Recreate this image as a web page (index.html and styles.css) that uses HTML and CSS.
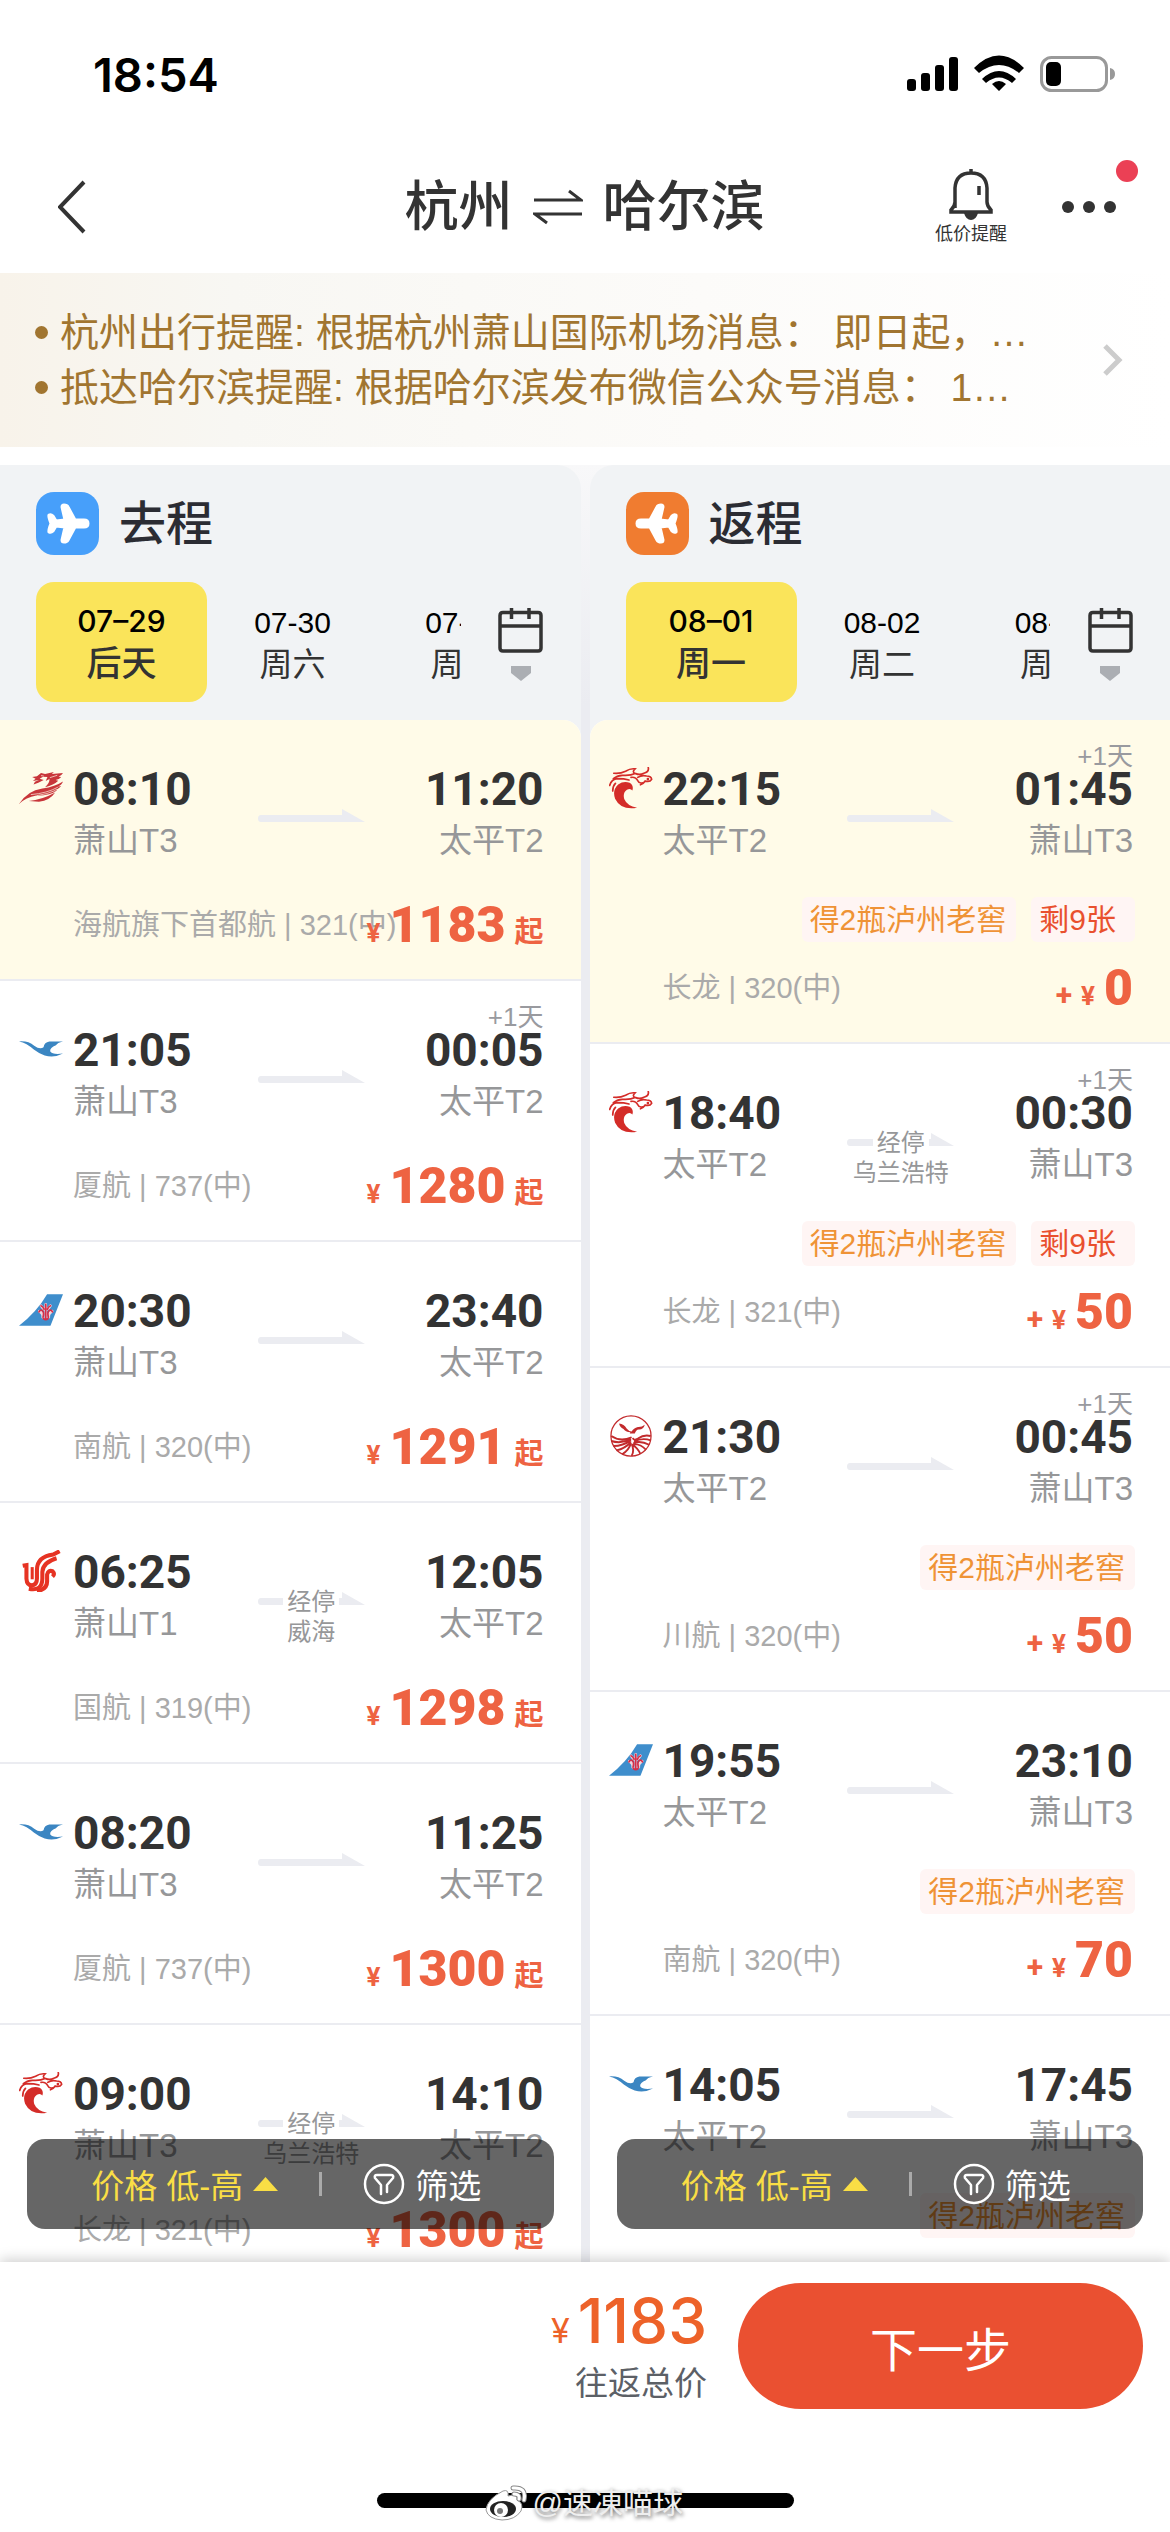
FILE: index.html
```
<!DOCTYPE html>
<html lang="zh-CN">
<head>
    <meta charset="UTF-8">
    <meta name="viewport" content="width=device-width, initial-scale=1.0">
    <title>杭州 ⇌ 哈尔滨</title>
    <link rel="stylesheet" href="styles.css">
</head>
<body>
    <!-- shared icons -->
    <svg class="sprite" aria-hidden="true">
        <symbol id="capital" viewBox="27 93 130 95">
            <path fill="#c8353a" d="M27 188Q52 148 96 142Q134 136 157 121Q154 131 141 136L152 135Q143 144 130 147L140 147Q118 164 78 163Q48 168 27 188ZM56 179Q94 176 134 154Q118 178 86 181ZM66 108L80 106L92 96L104 99L130 93L124 99L157 96Q152 104 144 107L152 108Q145 116 135 117L143 119Q130 132 104 138Q118 125 117 114L106 120L111 108L98 107L88 113L100 117L84 125L70 130L74 122L86 117L68 120L76 113Z"/>
            <path fill="none" stroke="#fffbe8" stroke-width="2" d="M62 160Q110 156 142 138M80 163Q112 158 134 148M92 104L100 105M118 110L140 103"/>
        </symbol>
        <symbol id="loong" viewBox="27 52 130 123">
            <path fill="#d42c28" d="M110 172Q62 180 45 145Q36 120 54 103Q70 92 88 98Q101 106 96 121Q90 113 80 119Q67 128 72 146Q80 166 110 172Z"/>
            <path fill="none" stroke="#d42c28" stroke-width="5" stroke-linecap="round" d="M29 106Q34 88 52 86Q72 86 86 90M38 122Q38 108 46 100M41 70Q60 72 76 64Q90 55 104 57Q94 66 104 71Q90 78 66 76Q50 77 40 86M106 71Q118 76 130 70Q146 66 143 53M92 82Q106 80 112 92Q116 101 126 98M112 82Q124 74 138 78Q152 78 153 88Q148 97 134 93Q128 102 120 104"/>
            <circle cx="142" cy="87" r="4" fill="#d42c28"/>
        </symbol>
        <symbol id="xiamen" viewBox="52 1474 113 43">
            <path fill="#3b86c2" d="M52 1476Q76 1474 91 1487Q106 1498 115 1491Q117 1478 130 1476H165Q150 1479 147 1486Q131 1492 132 1501Q138 1511 165 1507Q142 1519 118 1512Q104 1508 90 1497Q72 1480 52 1476Z"/>
        </symbol>
        <symbol id="southern" viewBox="27 12 130 93">
            <path fill="#3f8ecc" d="M27 105Q80 64 110 12H157L120 105Z"/>
            <path fill="none" stroke="#f3d5de" stroke-width="8" stroke-linecap="round" d="M97 80Q99 68 87 62M115 80Q113 68 125 62M92 46L100 56M120 46L112 56M106 42V84"/>
            <path fill="none" stroke="#d5304a" stroke-width="5" stroke-linecap="round" d="M98 80Q102 66 96 60Q90 56 86 64M114 80Q110 66 116 60Q122 56 126 64M92 46Q98 48 101 56M120 46Q114 48 111 56M106 42V84M99 84Q106 90 113 84"/>
        </symbol>
        <symbol id="airchina" viewBox="27 780 130 123">
            <g fill="none" stroke="#e63323" stroke-width="12">
                <path d="M38 826L49 824V864Q50 884 66 884Q80 882 80 864V838Q80 800 128 793L147 783"/>
                <path d="M66 830V866" stroke-width="9"/>
                <path d="M56 894Q96 902 96 864V844Q98 816 138 804"/>
                <path d="M80 901Q112 896 110 868V852Q114 838 126 842Q134 850 126 858"/>
            </g>
        </symbol>
        <symbol id="sichuan" viewBox="23 39 134 134">
            <circle cx="90" cy="106" r="64" fill="none" stroke="#c22a2c" stroke-width="4"/>
            <path fill="#c22a2c" d="M52 66Q68 68 76 82Q84 92 92 92Q98 80 112 77Q124 78 134 70Q130 86 114 85Q106 86 102 98H86L88 94Q72 94 66 84Q54 78 52 66Z"/>
            <g fill="none" stroke="#c22a2c" stroke-width="6">
                <path d="M27 106Q56 126 92 110M27 122Q58 132 90 116M34 138Q64 138 90 120M44 152Q70 146 90 126M62 164Q84 150 90 128"/>
                <path d="M153 106Q132 100 112 114Q98 122 96 112M153 120Q126 110 100 124M148 134Q122 120 98 128M138 150Q120 130 96 132M120 164Q112 144 94 134M92 170Q102 152 92 132"/>
            </g>
        </symbol>
        <symbol id="arrow" viewBox="0 0 107 20">
            <path fill="#ebecf1" d="M3 6H84V0L107 13H3Q0 13 0 9.500Q0 6 3 6Z"/>
        </symbol>
        <symbol id="plane" viewBox="0 0 63 63">
            <path fill="#fff" stroke="#fff" stroke-width="3" stroke-linejoin="round" d="M48 28H39L32 15Q31 13 28 13Q26 13 26 15L29 28L20 29L17 24Q15 22 13 23Q12 24 15 31.500Q12 39 13 40Q15 41 17 39L20 34L29 35L26 48Q26 50 28 50Q31 50 32 48L39 35H48Q52 35 52 31.500Q52 28 48 28Z"/>
        </symbol>
        <symbol id="calendar" viewBox="0 0 45 46">
            <path fill="none" stroke="#333" stroke-width="3.500" d="M5 4.500H40Q43 4.500 43 7.500V40Q43 43 40 43H5Q2 43 2 40V7.500Q2 4.500 5 4.500ZM2 18H43M13.500 0V11M31 0V11"/>
        </symbol>
        <symbol id="funnel" viewBox="0 0 42 42">
            <circle cx="21" cy="21" r="19" fill="none" stroke="#fff" stroke-width="2.500"/>
            <path fill="none" stroke="#fff" stroke-width="2.500" stroke-linecap="round" stroke-linejoin="round" d="M18 31V22L12 15Q11 12 14 12H28Q31 12 30 15L24 22V29"/>
        </symbol>
    </svg>

    <div class="status-bar">
        <span class="clock">18:54</span>
        <svg class="status-icons" viewBox="0 0 208 38" aria-hidden="true">
            <rect x="0" y="24" width="9" height="12" rx="3"/>
            <rect x="14" y="18" width="9" height="18" rx="3"/>
            <rect x="28" y="10" width="9" height="26" rx="3"/>
            <rect x="42" y="2" width="9" height="34" rx="3"/>
            <path d="M92 36L85 29Q92 23 99 29ZM75 24L79 28Q92 17 105 28L109 24Q92 8 75 24ZM67 13L72 18Q92 2 112 18L117 13Q92 -12 67 13Z"/>
            <rect x="134.500" y="2.500" width="65" height="33" rx="10" fill="none" stroke="#999" stroke-width="3"/>
            <rect x="139" y="7" width="15" height="24" rx="5"/>
            <path fill="#999" d="M203 13Q208 14 208 19Q208 24 203 25Z"/>
        </svg>
    </div>

    <header class="nav">
        <button class="back" aria-label="返回">
            <svg width="28" height="54" viewBox="0 0 28 54"><path fill="none" stroke="#333" stroke-width="4" d="M26 2L2 27L26 52"/></svg>
        </button>
        <h1>杭州
            <svg width="50" height="36" viewBox="0 0 50 36"><path fill="none" stroke="#333" stroke-width="3" d="M1 11H48L36 2M49 25H2L14 34"/></svg>
            哈尔滨</h1>
        <div class="nav-right">
            <button class="remind">
                <svg width="46" height="52" viewBox="0 0 46 52"><path fill="none" stroke="#333" stroke-width="3.500" d="M23 1V5M7 40V20Q8 5 23 5Q38 5 39 20V34Q39 38 43 42V44H3V42Q7 38 7 34M31 18V27"/><path fill="#333" d="M16 45H30Q28 52 23 52Q18 52 16 45Z"/></svg>
                <span>低价提醒</span>
            </button>
            <button class="more" aria-label="更多">
                <svg width="56" height="14" viewBox="0 0 56 14" fill="#333"><circle cx="7" cy="7" r="6"/><circle cx="28" cy="7" r="6"/><circle cx="49" cy="7" r="6"/></svg>
                <i class="dot"></i>
            </button>
        </div>
    </header>

    <a class="notice" href="#">
        <ul>
            <li>杭州出行提醒: 根据杭州萧山国际机场消息： 即日起，…</li>
            <li>抵达哈尔滨提醒: 根据哈尔滨发布微信公众号消息： 1…</li>
        </ul>
        <svg width="20" height="32" viewBox="0 0 20 32"><path fill="none" stroke="#ccc" stroke-width="5" d="M2 2L16 16L2 30"/></svg>
    </a>

    <main class="columns">
        <section class="col col-go">
            <div class="col-head">
                <h2><svg class="badge badge-blue"><use href="#plane"/></svg>去程</h2>
                <div class="dates">
                    <div class="date-list">
                        <button class="date active"><span>07–29</span><b>后天</b></button>
                        <button class="date"><span>07-30</span><b>周六</b></button>
                        <button class="date"><span>07-31</span><b>周日</b></button>
                    </div>
                    <button class="calendar" aria-label="选择日期">
                        <svg width="45" height="46"><use href="#calendar"/></svg>
                        <svg width="22" height="15" viewBox="0 0 22 15"><path fill="#abaeb3" d="M1 0H21V7L11 15L1 7Z"/></svg>
                    </button>
                </div>
            </div>
            <ul class="flights">
                <li class="flight selected">
                    <div class="route">
                        <svg class="logo"><use href="#capital"/></svg>
                        <div><time>08:10</time><p>萧山T3</p></div>
                        <div class="leg"><svg><use href="#arrow"/></svg></div>
                        <div class="arrive"><time>11:20</time><p>太平T2</p></div>
                    </div>
                    <div class="bottom"><span class="plane">海航旗下首都航 | 321(中)</span><span class="price"><i>¥</i><b>1183</b><em>起</em></span></div>
                </li>
                <li class="flight">
                    <div class="route">
                        <svg class="logo"><use href="#xiamen"/></svg>
                        <div><time>21:05</time><p>萧山T3</p></div>
                        <div class="leg"><svg><use href="#arrow"/></svg></div>
                        <div class="arrive"><small>+1天</small><time>00:05</time><p>太平T2</p></div>
                    </div>
                    <div class="bottom"><span class="plane">厦航 | 737(中)</span><span class="price"><i>¥</i><b>1280</b><em>起</em></span></div>
                </li>
                <li class="flight">
                    <div class="route">
                        <svg class="logo"><use href="#southern"/></svg>
                        <div><time>20:30</time><p>萧山T3</p></div>
                        <div class="leg"><svg><use href="#arrow"/></svg></div>
                        <div class="arrive"><time>23:40</time><p>太平T2</p></div>
                    </div>
                    <div class="bottom"><span class="plane">南航 | 320(中)</span><span class="price"><i>¥</i><b>1291</b><em>起</em></span></div>
                </li>
                <li class="flight">
                    <div class="route">
                        <svg class="logo"><use href="#airchina"/></svg>
                        <div><time>06:25</time><p>萧山T1</p></div>
                        <div class="leg"><svg><use href="#arrow"/></svg><span class="stop">经停</span><span>威海</span></div>
                        <div class="arrive"><time>12:05</time><p>太平T2</p></div>
                    </div>
                    <div class="bottom"><span class="plane">国航 | 319(中)</span><span class="price"><i>¥</i><b>1298</b><em>起</em></span></div>
                </li>
                <li class="flight">
                    <div class="route">
                        <svg class="logo"><use href="#xiamen"/></svg>
                        <div><time>08:20</time><p>萧山T3</p></div>
                        <div class="leg"><svg><use href="#arrow"/></svg></div>
                        <div class="arrive"><time>11:25</time><p>太平T2</p></div>
                    </div>
                    <div class="bottom"><span class="plane">厦航 | 737(中)</span><span class="price"><i>¥</i><b>1300</b><em>起</em></span></div>
                </li>
                <li class="flight">
                    <div class="route">
                        <svg class="logo"><use href="#loong"/></svg>
                        <div><time>09:00</time><p>萧山T3</p></div>
                        <div class="leg"><svg><use href="#arrow"/></svg><span class="stop">经停</span><span>乌兰浩特</span></div>
                        <div class="arrive"><time>14:10</time><p>太平T2</p></div>
                    </div>
                    <div class="bottom"><span class="plane">长龙 | 321(中)</span><span class="price"><i>¥</i><b>1300</b><em>起</em></span></div>
                </li>
            </ul>
            <div class="tools">
                <button class="sort">价格 低-高<svg width="25" height="14" viewBox="0 0 25 14"><path fill="#f9de45" d="M0 14L12.500 0L25 14Z"/></svg></button>
                <span class="line"></span>
                <button class="filter"><svg width="42" height="42"><use href="#funnel"/></svg>筛选</button>
            </div>
        </section>

        <section class="col col-back">
            <div class="col-head">
                <h2><svg class="badge badge-orange" viewBox="0 0 63 63"><use href="#plane" width="63" height="63" transform="rotate(180 31.500 31.500)"/></svg>返程</h2>
                <div class="dates">
                    <div class="date-list">
                        <button class="date active"><span>08–01</span><b>周一</b></button>
                        <button class="date"><span>08-02</span><b>周二</b></button>
                        <button class="date"><span>08-03</span><b>周三</b></button>
                    </div>
                    <button class="calendar" aria-label="选择日期">
                        <svg width="45" height="46"><use href="#calendar"/></svg>
                        <svg width="22" height="15" viewBox="0 0 22 15"><path fill="#abaeb3" d="M1 0H21V7L11 15L1 7Z"/></svg>
                    </button>
                </div>
            </div>
            <ul class="flights">
                <li class="flight selected">
                    <div class="route">
                        <svg class="logo"><use href="#loong"/></svg>
                        <div><time>22:15</time><p>太平T2</p></div>
                        <div class="leg"><svg><use href="#arrow"/></svg></div>
                        <div class="arrive"><small>+1天</small><time>01:45</time><p>萧山T3</p></div>
                    </div>
                    <div class="tags"><span class="gift">得2瓶泸州老窖</span><span class="left">剩9张</span></div>
                    <div class="bottom"><span class="plane">长龙 | 320(中)</span><span class="price"><i class="plus">+</i><i>¥</i><b>0</b></span></div>
                </li>
                <li class="flight">
                    <div class="route">
                        <svg class="logo"><use href="#loong"/></svg>
                        <div><time>18:40</time><p>太平T2</p></div>
                        <div class="leg"><svg><use href="#arrow"/></svg><span class="stop">经停</span><span>乌兰浩特</span></div>
                        <div class="arrive"><small>+1天</small><time>00:30</time><p>萧山T3</p></div>
                    </div>
                    <div class="tags"><span class="gift">得2瓶泸州老窖</span><span class="left">剩9张</span></div>
                    <div class="bottom"><span class="plane">长龙 | 321(中)</span><span class="price"><i class="plus">+</i><i>¥</i><b>50</b></span></div>
                </li>
                <li class="flight">
                    <div class="route">
                        <svg class="logo"><use href="#sichuan"/></svg>
                        <div><time>21:30</time><p>太平T2</p></div>
                        <div class="leg"><svg><use href="#arrow"/></svg></div>
                        <div class="arrive"><small>+1天</small><time>00:45</time><p>萧山T3</p></div>
                    </div>
                    <div class="tags"><span class="gift">得2瓶泸州老窖</span></div>
                    <div class="bottom"><span class="plane">川航 | 320(中)</span><span class="price"><i class="plus">+</i><i>¥</i><b>50</b></span></div>
                </li>
                <li class="flight">
                    <div class="route">
                        <svg class="logo"><use href="#southern"/></svg>
                        <div><time>19:55</time><p>太平T2</p></div>
                        <div class="leg"><svg><use href="#arrow"/></svg></div>
                        <div class="arrive"><time>23:10</time><p>萧山T3</p></div>
                    </div>
                    <div class="tags"><span class="gift">得2瓶泸州老窖</span></div>
                    <div class="bottom"><span class="plane">南航 | 320(中)</span><span class="price"><i class="plus">+</i><i>¥</i><b>70</b></span></div>
                </li>
                <li class="flight">
                    <div class="route">
                        <svg class="logo"><use href="#xiamen"/></svg>
                        <div><time>14:05</time><p>太平T2</p></div>
                        <div class="leg"><svg><use href="#arrow"/></svg></div>
                        <div class="arrive"><time>17:45</time><p>萧山T3</p></div>
                    </div>
                    <div class="tags"><span class="gift">得2瓶泸州老窖</span></div>
                </li>
            </ul>
            <div class="tools">
                <button class="sort">价格 低-高<svg width="25" height="14" viewBox="0 0 25 14"><path fill="#f9de45" d="M0 14L12.500 0L25 14Z"/></svg></button>
                <span class="line"></span>
                <button class="filter"><svg width="42" height="42"><use href="#funnel"/></svg>筛选</button>
            </div>
        </section>
    </main>

    <footer class="footer">
        <div class="pay">
            <div class="total">
                <div class="sum"><span>¥</span><strong>1183</strong></div>
                <p>往返总价</p>
            </div>
            <button class="next">下一步</button>
        </div>
        <div class="home-bar">
            <div class="watermark">
                <svg width="42" height="36" viewBox="0 0 42 36">
                    <path fill="#fff" stroke="#999" d="M18 6Q24 4 23 11Q33 8 32 15Q39 18 36 26Q30 35 17 35Q3 34 1 25Q2 14 18 6Z"/>
                    <ellipse cx="18" cy="24" rx="13" ry="8" fill="#222"/>
                    <circle cx="16" cy="25" r="7" fill="#fff"/>
                    <circle cx="15" cy="26" r="3" fill="#777"/>
                    <path fill="none" stroke="#888" stroke-width="5" stroke-linecap="round" d="M28 3Q42 2 39 15M29 9Q35 9 34 14"/>
                    <path fill="none" stroke="#fff" stroke-width="3" stroke-linecap="round" d="M28 3Q42 2 39 15M29 9Q35 9 34 14"/>
                </svg>
                <span>@速凍喵球</span>
            </div>
        </div>
    </footer>
</body>
</html>
```
FILE: styles.css
```
*{
    margin: 0;
    padding: 0;
    box-sizing: border-box;
}
body{
    display: flex;
    flex-direction: column;
    height: 100vh;
    background-color: #fff;
    color: #333;
    font-family: "Liberation Sans", "Noto Sans CJK SC", sans-serif;
}
button{
    border: none;
    background: none;
    color: inherit;
    font: inherit;
}
ul{
    list-style: none;
}
svg{
    display: block;
    flex-shrink: 0;
}
i, em{
    font-style: normal;
}
.sprite{
    position: absolute;
    width: 0;
    height: 0;
}

/* top */
.status-bar{
    display: flex;
    justify-content: space-between;
    align-items: center;
    height: 148px;
    padding: 0 55px 0 93px;
}
.clock{
    font-family: Inter, sans-serif;
    font-size: 47px;
    font-weight: 600;
    color: #000;
}
.status-icons{
    width: 208px;
    height: 38px;
}
.nav{
    display: grid;
    grid-template-columns: 1fr auto 1fr;
    align-items: center;
    height: 125px;
    padding: 0 53px 7px 52px;
}
.back{
    justify-self: start;
    margin-left: 6px;
}
.nav h1{
    display: flex;
    align-items: center;
    gap: 20px;
    font-size: 54px;
    font-weight: 500;
    line-height: 64px;
}
.nav-right{
    display: flex;
    justify-content: flex-end;
    align-items: center;
    gap: 54px;
}
.remind{
    display: flex;
    flex-direction: column;
    align-items: center;
    gap: 2px;
    font-size: 18px;
    line-height: 24px;
}
.more{
    position: relative;
}
.dot{
    position: absolute;
    top: -40px;
    right: -21px;
    width: 22px;
    height: 22px;
    border-radius: 50%;
    background-color: #eb4055;
}
.notice{
    display: flex;
    align-items: center;
    justify-content: space-between;
    padding: 32px 47px 32px 35px;
    background: linear-gradient(90deg, #f8f3ea, #f8f7f3 20%, #fcfbf9 60%, #fff);
    color: #a17530;
    font-size: 39px;
    line-height: 55px;
    text-decoration: none;
}
.notice li{
    display: flex;
    align-items: center;
    gap: 12px;
}
.notice li::before{
    content: "";
    width: 13px;
    height: 13px;
    border-radius: 50%;
    background-color: #a17530;
}

/* columns */
.columns{
    flex: 1;
    min-height: 0;
    display: grid;
    grid-template-columns: 1fr 1fr;
    grid-template-rows: 100%;
    gap: 9px;
    margin-top: 18px;
    background: linear-gradient(#f8f8f9, #ebecf1 240px);
}
.col{
    position: relative;
    display: flex;
    flex-direction: column;
    min-width: 0;
    overflow: hidden;
    background-color: #f1f3f5;
}
.col-go{
    border-top-right-radius: 24px;
}
.col-back{
    border-top-left-radius: 24px;
}
.col-head{
    padding: 27px 0 18px 36px;
}
.col h2{
    display: flex;
    align-items: center;
    gap: 20px;
    font-size: 47px;
    font-weight: 500;
    line-height: 63px;
    color: #2b2c33;
}
.badge{
    width: 63px;
    height: 63px;
    border-radius: 18px;
}
.badge-blue{
    background-color: #479ffa;
}
.badge-orange{
    background-color: #f07c30;
}
.dates{
    display: flex;
    margin-top: 27px;
}
.date-list{
    flex: 1;
    display: flex;
    overflow: hidden;
}
.date{
    flex: none;
    width: 171px;
    height: 120px;
    border-radius: 18px;
    padding-top: 3px;
    font-size: 30px;
    line-height: 42px;
    color: #000;
}
.date b{
    display: block;
    font-size: 33px;
    font-weight: 400;
    color: #333;
}
.date.active{
    padding-top: 0;
    background-color: #fae45a;
    font-family: Inter, "Noto Sans CJK SC", sans-serif;
    font-weight: 500;
}
.date.active b{
    font-size: 35px;
    font-weight: 500;
}
.calendar{
    display: flex;
    flex-direction: column;
    align-items: center;
    justify-content: center;
    gap: 12px;
    width: 120px;
    padding-top: 5px;
}

/* flights */
.flights{
    flex: 1 0 auto;
    overflow: hidden;
    background-color: #fff;
}
.col-go .flights{
    border-top-right-radius: 18px;
}
.col-back .flights{
    border-top-left-radius: 18px;
}
.flight{
    padding: 43px 37px 24px 19px;
    border-bottom: 2px solid #ebecf1;
}
.flight:last-child{
    border-bottom: none;
}
.selected{
    background-color: #fffbe8;
}
.route{
    display: grid;
    grid-template-columns: 44px auto 1fr auto;
}
.route > div:nth-child(2){
    margin-left: 10px;
}
.logo{
    width: 44px;
    height: 42px;
    margin-top: 4px;
}
time{
    display: block;
    font-family: Roboto, sans-serif;
    font-size: 46px;
    font-weight: 700;
    line-height: 52px;
}
.route p{
    font-size: 33px;
    line-height: 52px;
    color: #969799;
}
.arrive{
    position: relative;
    text-align: right;
}
.arrive small{
    position: absolute;
    top: -20px;
    right: 0;
    font-size: 26px;
    line-height: 26px;
    color: #999a9f;
    white-space: nowrap;
}
.leg{
    display: grid;
    grid-template-rows: 30px 30px;
    justify-content: center;
    justify-items: center;
    align-items: center;
    padding: 41px 0 0 6px;
    height: 104px;
    font-size: 24px;
    line-height: 30px;
    color: #969799;
}
.leg svg{
    grid-area: 1 / 1;
    width: 107px;
    height: 20px;
}
.stop{
    grid-area: 1 / 1;
    padding: 0 4px;
    background-color: #fff;
}
.tags{
    display: flex;
    justify-content: flex-end;
    gap: 15px;
    margin: 30px -2px -12px 0;
}
.tags span{
    padding: 0 10px 0 8px;
    border-radius: 6px;
    background-color: #fff5f4;
    font-size: 30px;
    line-height: 45px;
}
.tags .gift{
    color: #ef9336;
}
.tags .left{
    padding-right: 19px;
    color: #e9502e;
}
.bottom{
    display: flex;
    justify-content: space-between;
    align-items: center;
    margin-top: 28px;
    padding-left: 54px;
}
.plane{
    min-width: 0;
    flex: 1 1 0;
    font-size: 29px;
    line-height: 40px;
    color: #aaa;
    white-space: nowrap;
}
.price{
    display: flex;
    align-items: baseline;
    gap: 9px;
    font-family: Roboto, "Noto Sans CJK SC", sans-serif;
    font-weight: 700;
    line-height: 60px;
    color: #ee6342;
}
.price i{
    font-size: 26px;
    line-height: 30px;
}
.price .plus{
    font-size: 30px;
}
.price b{
    font-size: 50px;
}
.price em{
    font-size: 29px;
    line-height: 30px;
}

/* sort and filter, floats over the list */
.tools{
    position: absolute;
    left: 27px;
    right: 27px;
    bottom: 33px;
    display: flex;
    justify-content: center;
    align-items: center;
    gap: 41px;
    height: 90px;
    padding-right: 8px;
    border-radius: 18px;
    background-color: rgba(0, 0, 0, 0.6);
    font-size: 33px;
    color: #fff;
}
.tools button{
    display: flex;
    align-items: center;
    gap: 10px;
}
.tools .sort{
    color: #f9de45;
}
.line{
    width: 3px;
    height: 24px;
    background-color: #aaa;
}

/* footer */
.footer{
    position: relative;
    padding: 21px 27px 24px;
    background-color: #fff;
    box-shadow: 0 -3px 12px rgba(0, 0, 0, 0.18);
}
.pay{
    display: flex;
    justify-content: flex-end;
    align-items: center;
    gap: 31px;
}
.total{
    text-align: right;
}
.sum{
    display: flex;
    align-items: baseline;
    justify-content: flex-end;
    gap: 8px;
    font-family: Inter, sans-serif;
    line-height: 76px;
    color: #ed6229;
}
.sum span{
    font-size: 34px;
    line-height: 40px;
}
.sum strong{
    font-size: 62px;
    font-weight: 500;
}
.total p{
    font-size: 33px;
    line-height: 50px;
    color: #5c6066;
}
.next{
    width: 405px;
    height: 126px;
    border-radius: 63px;
    background-color: #ea5031;
    font-size: 47px;
    color: #fff;
}
.home-bar{
    position: relative;
    width: 417px;
    height: 15px;
    margin: 84px auto 0;
    border-radius: 8px;
    background-color: #000;
}
.watermark{
    position: absolute;
    top: -10px;
    left: 108px;
    display: flex;
    align-items: center;
    gap: 6px;
    font-size: 30px;
    line-height: 40px;
    color: #eee;
    text-shadow: 1px 2px 4px rgba(0, 0, 0, 0.6);
    white-space: nowrap;
}
```
